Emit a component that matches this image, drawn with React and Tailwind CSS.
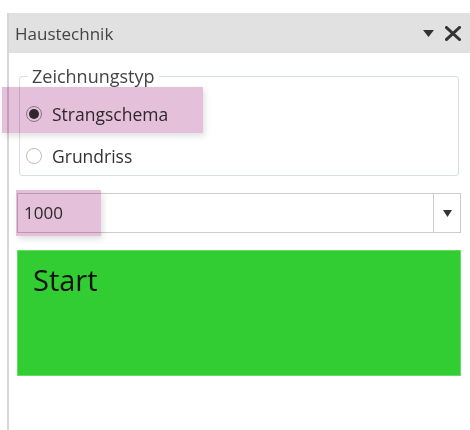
export default function App() {
  const font = { fontFamily: '"Open Sans", "Noto Sans", sans-serif' };
  return (
    <div className="w-[470px] h-[430px] bg-white pt-[13px] pl-[7px] overflow-hidden" style={font}>
      <div className="relative h-[417px] border-l-2 border-[#d6d6d6] flex flex-col">
        {/* panel title bar */}
        <div className="h-[40px] bg-[#e1e1e1] flex items-center pl-[6px] pr-[9px]">
          <span className="text-[17px] text-[#444] leading-none">Haustechnik</span>
          <div className="ml-auto flex items-center gap-[11px]">
            <svg width="11" height="7" viewBox="0 0 11 7">
              <path d="M0 0 L11 0 L5.5 7 Z" fill="#333" />
            </svg>
            <svg width="16" height="15" viewBox="0 0 16 15">
              <path d="M1.5 1.5 L14.5 13.5 M14.5 1.5 L1.5 13.5" stroke="#333" strokeWidth="3" strokeLinecap="square" />
            </svg>
          </div>
        </div>

        <div className="flex flex-col pl-[8px] pr-[9px]">
          {/* drawing type group */}
          <fieldset className="mx-[2px] mt-[12px] h-[111px] border border-[#d6dfe7] rounded-[3px] pl-[6px]">
            <legend className="ml-[2px] px-[4px] text-[18px] leading-[22px] text-[#444]">Zeichnungstyp</legend>
            <div className="flex flex-col">
              <label className="h-[42px] flex items-center gap-[10px] mt-[6px]">
                <span className="w-[16px] h-[16px] rounded-full border border-[#9a9a9a] bg-white flex items-center justify-center">
                  <span className="w-[10px] h-[10px] rounded-full bg-[#333]" />
                </span>
                <span className="text-[17.5px] text-[#333]">Strangschema</span>
              </label>
              <label className="h-[42px] flex items-center gap-[10px]">
                <span className="w-[16px] h-[16px] rounded-full border border-[#bdbdbd] bg-white" />
                <span className="text-[17.5px] text-[#333]">Grundriss</span>
              </label>
            </div>
          </fieldset>

          {/* scale selector */}
          <div className="mt-[17px] h-[40px] border border-[#cccccc] flex">
            <div className="flex-1 flex items-center pl-[6px] text-[17px] text-[#333]">1000</div>
            <div className="w-[27px] border-l border-[#cccccc] flex items-center justify-center">
              <svg width="9" height="7" viewBox="0 0 9 7">
                <path d="M0 0 L9 0 L4.5 7 Z" fill="#333" />
              </svg>
            </div>
          </div>

          {/* start button */}
          <div className="mt-[17px] h-[126px] bg-[#32cd32] border border-[#62dc62] pl-[15px] pt-[9px]">
            <span className="text-[29px] leading-[40px] text-[#111]">Start</span>
          </div>
        </div>

        {/* highlight markers */}
        <div className="absolute left-[-7px] top-[74px] w-[201px] h-[46px] bg-[#e4c0da] mix-blend-multiply shadow-[2px_3px_6px_rgba(0,0,0,0.12)]" />
        <div className="absolute left-[7px] top-[177px] w-[85px] h-[46px] bg-[#e4c0da] mix-blend-multiply shadow-[2px_3px_6px_rgba(0,0,0,0.12)]" />
      </div>
    </div>
  );
}
